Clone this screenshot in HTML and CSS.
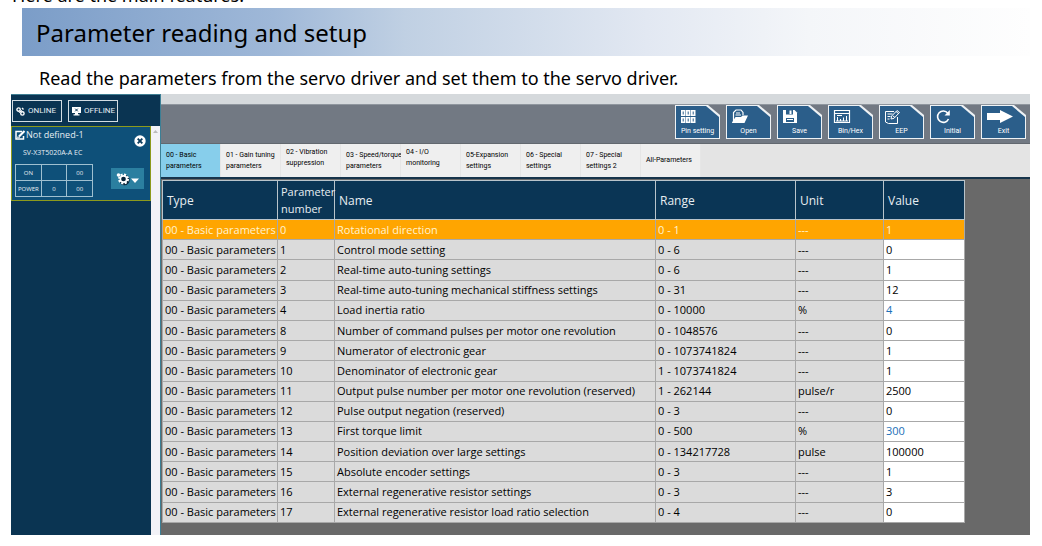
FILE: index.html
```
<!DOCTYPE html>
<html lang="en">
<head>
<meta charset="utf-8">
<title>Parameter reading and setup</title>
<link rel="stylesheet" href="styles.css">
</head>
<body>
<p class="intro">Here are the main features:</p>
<h1 class="banner">Parameter reading and setup</h1>
<p class="lead">Read the parameters from the servo driver and set them to the servo driver.</p>
<div class="app">
  <aside class="sidebar">
    <div class="modes">
      <button class="mode" type="button"><svg width="9" height="9" viewBox="0 0 9 9" fill="none" stroke="#fff" stroke-width="1.4"><circle cx="2.6" cy="2.6" r="1.7"/><circle cx="6.4" cy="6.4" r="1.7"/><path d="M3 5.5 6 3.5M6 1l1.5 1.5"/></svg>ONLINE</button>
      <button class="mode" type="button"><svg width="9" height="9" viewBox="0 0 9 9"><path fill="#fff" d="M0 0h9v6H6v1.2h1.5V8.500H1.500V7.200H3V6H0z"/><path stroke="#0a3555" d="m3.200 1.700 2.600 2.600m0-2.600L3.200 4.300"/></svg>OFFLINE</button>
    </div>
    <div class="devices">
      <section class="device">
        <div class="device-head">
          <svg width="11" height="10" viewBox="0 0 11 10" fill="none" stroke="#fff"><path stroke-width="1.500" d="M7 1.500H1v7.500h7.500V6"/><path stroke-width="2.200" d="M4 6.500 9.500 1"/><path d="M2 7.200h3"/></svg>
          <span>Not defined-1</span>
          <button class="close" type="button" aria-label="Remove device"><svg width="12" height="12" viewBox="0 0 12 12"><circle cx="6" cy="6" r="5.700" fill="#fff"/><path d="m3.700 3.700 4.600 4.600m0-4.600L3.700 8.300" stroke="#0b3c5d" stroke-width="1.900"/></svg></button>
        </div>
        <div class="model">SV-X3T5020A-A EC</div>
        <div class="device-body">
          <table class="status">
            <tr><td>ON</td><td></td><td>00</td></tr>
            <tr><td>POWER</td><td>0</td><td>00</td></tr>
          </table>
          <button class="gear" type="button" aria-label="Device settings"><svg width="24" height="14" viewBox="0 0 24 14"><circle cx="8.500" cy="8" r="3.900" fill="none" stroke="#06243a" stroke-width="2.500"/><circle cx="7.500" cy="7" r="4.300" fill="none" stroke="#fff" stroke-width="2.400" stroke-dasharray="2 1.370"/><circle cx="7.500" cy="7" r="3.200" fill="#06243a" stroke="#fff" stroke-width="1.700"/><circle cx="2.500" cy="3" r="1.800" fill="#fff"/><path d="M15 6.500h8l-4 4.500z" fill="#fff"/></svg></button>
        </div>
      </section>
      <div class="scroll"><svg width="5" height="3" viewBox="0 0 5 3"><path d="M0 3 2.500 0 5 3z" fill="#bbb"/></svg></div>
    </div>
  </aside>
  <main class="main">
    <div class="strip"></div>
    <div class="toolbar">
      <button class="tool" type="button"><span class="face"><svg width="22" height="16" viewBox="0 0 22 16"><path fill="#fff" d="M1 1h4.500v6H1zM6 1h4.500v6H6zM11 1h4.500v6H11zM1 8h4.500v6H1zM6 8h4.500v6H6zM11 8h4.500v6H11z"/><path stroke="#2b5e8a" d="M3.200 2.500v3M8.200 2.500v3M13.200 2.500v3M3.200 9.500v3M8.200 9.500v3M13.200 9.500v3"/></svg>Pin setting</span></button>
      <button class="tool" type="button"><span class="face"><svg width="22" height="16" viewBox="0 0 22 16"><path fill="none" stroke="#fff" stroke-width="1.200" d="M2.500 13V3.500L5 1h5l2 2.500V6M5 4h4M4.500 6H10"/><path fill="#fff" d="M1 13.500 4.500 8H10l1.500-1.500H17L13.500 14H1z"/></svg>Open</span></button>
      <button class="tool" type="button"><span class="face"><svg width="22" height="16" viewBox="0 0 22 16"><path fill="#fff" d="M1 1h11.500L15 3.500V14H1z"/><path fill="#2b5e8a" d="M4 1h7v4.500H4zM4 9h8v4H4z"/><path fill="#fff" d="M7.500 1.500h2V5h-2zM5 10h6v1H5z"/></svg>Save</span></button>
      <button class="tool" type="button"><span class="face"><svg width="22" height="16" viewBox="0 0 22 16" fill="none" stroke="#fff"><path stroke-width="1.200" d="M1.500 1.500h15v12h-15zM1.500 4.500h15"/><path d="M4.500 8v4M7.500 10v2M10.500 8.500V12M13.500 7v5M3 12h12M4 6.500h5"/></svg>Bin/Hex</span></button>
      <button class="tool" type="button"><span class="face"><svg width="22" height="16" viewBox="0 0 22 16" fill="none" stroke="#fff"><path d="M10 2.500H1.500v10.500l3 1.500h9V8M3.500 5h5M3.500 7.500h3M3.500 10h2"/><path d="m7 10 .7-3L13 1.500l2.500 2L10 9.300zM9 7l2 1.500M12 2.500l2.500 2"/></svg>EEP</span></button>
      <button class="tool" type="button"><span class="face"><svg width="22" height="16" viewBox="0 0 22 16"><path fill="none" stroke="#fff" stroke-width="1.600" d="M12.800 4.200A5.700 5.700 0 1 0 13.500 10"/><path fill="#fff" d="M14.800 1v5.500H9.500z"/></svg>Initial</span></button>
      <button class="tool" type="button"><span class="face"><svg width="28" height="16" viewBox="0 0 28 16"><path fill="#fff" d="M1 4h13V1l13 6.500L14 14v-3H1z"/></svg>Exit</span></button>
    </div>
    <nav class="tabs">
      <button class="tab active" type="button">00 - Basic<br>parameters</button>
      <button class="tab" type="button">01 - Gain tuning<br>parameters</button>
      <button class="tab high" type="button">02 - Vibration<br>suppression</button>
      <button class="tab" type="button">03 - Speed/torque<br>parameters</button>
      <button class="tab high" type="button">04 - I/O<br>monitoring</button>
      <button class="tab" type="button">05-Expansion<br>settings</button>
      <button class="tab" type="button">06 - Special<br>settings</button>
      <button class="tab" type="button">07 - Special<br>settings 2</button>
      <button class="tab" type="button">All-Parameters</button>
    </nav>
    <div class="content">
      <table class="params">
        <colgroup><col class="c-type"><col class="c-num"><col class="c-name"><col class="c-range"><col class="c-unit"><col class="c-value"></colgroup>
        <thead><tr><th>Type</th><th>Parameter number</th><th>Name</th><th>Range</th><th>Unit</th><th>Value</th></tr></thead>
        <tbody>
          <tr class="selected"><td>00 - Basic parameters</td><td>0</td><td>Rotational direction</td><td>0 - 1</td><td>---</td><td>1</td></tr>
          <tr><td>00 - Basic parameters</td><td>1</td><td>Control mode setting</td><td>0 - 6</td><td>---</td><td>0</td></tr>
          <tr><td>00 - Basic parameters</td><td>2</td><td>Real-time auto-tuning settings</td><td>0 - 6</td><td>---</td><td>1</td></tr>
          <tr><td>00 - Basic parameters</td><td>3</td><td>Real-time auto-tuning mechanical stiffness settings</td><td>0 - 31</td><td>---</td><td>12</td></tr>
          <tr><td>00 - Basic parameters</td><td>4</td><td>Load inertia ratio</td><td>0 - 10000</td><td>%</td><td class="changed">4</td></tr>
          <tr><td>00 - Basic parameters</td><td>8</td><td>Number of command pulses per motor one revolution</td><td>0 - 1048576</td><td>---</td><td>0</td></tr>
          <tr><td>00 - Basic parameters</td><td>9</td><td>Numerator of electronic gear</td><td>0 - 1073741824</td><td>---</td><td>1</td></tr>
          <tr><td>00 - Basic parameters</td><td>10</td><td>Denominator of electronic gear</td><td>1 - 1073741824</td><td>---</td><td>1</td></tr>
          <tr><td>00 - Basic parameters</td><td>11</td><td>Output pulse number per motor one revolution (reserved)</td><td>1 - 262144</td><td>pulse/r</td><td>2500</td></tr>
          <tr><td>00 - Basic parameters</td><td>12</td><td>Pulse output negation (reserved)</td><td>0 - 3</td><td>---</td><td>0</td></tr>
          <tr><td>00 - Basic parameters</td><td>13</td><td>First torque limit</td><td>0 - 500</td><td>%</td><td class="changed">300</td></tr>
          <tr><td>00 - Basic parameters</td><td>14</td><td>Position deviation over large settings</td><td>0 - 134217728</td><td>pulse</td><td>100000</td></tr>
          <tr><td>00 - Basic parameters</td><td>15</td><td>Absolute encoder settings</td><td>0 - 3</td><td>---</td><td>1</td></tr>
          <tr><td>00 - Basic parameters</td><td>16</td><td>External regenerative resistor settings</td><td>0 - 3</td><td>---</td><td>3</td></tr>
          <tr><td>00 - Basic parameters</td><td>17</td><td>External regenerative resistor load ratio selection</td><td>0 - 4</td><td>---</td><td>0</td></tr>
        </tbody>
      </table>
    </div>
  </main>
</div>
</body>
</html>
```
FILE: styles.css
```
* { box-sizing: border-box; }
body { margin: 0; background: #fff; color: #000; font-family: "Noto Sans", "Open Sans", sans-serif; overflow: hidden; }
button { font: inherit; color: inherit; margin: 0; cursor: pointer; }
svg { display: block; flex: none; }

.intro { margin: -17px 0 0 12px; font-size: 18px; line-height: 25px; }
.banner { margin: 0 12px 0 22px; padding: 2px 14px 0; font-size: 24px; line-height: 46px; font-weight: 400;
  background: linear-gradient(90deg, #7b9dc8 0%, #9fb8d8 25%, #c0d0e3 38%, #e2e8f2 62%, #f4f6f9 78%, #fefefe 100%); }
.lead { margin: 0; padding: 7px 0 1px 39px; font-size: 18px; line-height: 30px; }

.app { display: flex; margin: 0 12px 0 11px; background: #0a3452; }
.sidebar { display: flex; flex-direction: column; width: 150px; flex: none; border-top: 1px solid #3f7e92; border-right: 1px solid #3c7f95; color: #e6eef3; }
.modes { display: flex; gap: 6px; padding: 5px 1px 4px; }
.mode { display: flex; align-items: center; gap: 3px; width: 50px; height: 22px; padding: 0 3px; border: 1px solid #d3dde3; background: transparent; font: 8px/12px Roboto, sans-serif; }
.devices { display: flex; flex: 1; }
.device { flex: 1; align-self: flex-start; height: 75px; border: 1px solid #8d9a1c; background: #0e5079; padding: 0 3px; }
.device-head { display: flex; align-items: center; height: 15px; font: 9px/14px "Open Sans", sans-serif; }
.close { margin: 12px 1px 0 auto; padding: 0; border: 0; background: none; }
.model { padding-left: 8px; font: 7px/22px "Open Sans", sans-serif; }
.device-body { display: flex; justify-content: space-between; }
.status { width: 78px; height: 33px; border-collapse: collapse; table-layout: fixed; font: 6px/12px "Open Sans", sans-serif; }
.status td { border: 1px solid #9fc0d0; padding: 0; text-align: center; }
.gear { display: flex; align-items: center; justify-content: center; width: 33px; height: 21px; margin: 4px 3px 0 0; padding: 0; border: 0; background: #2b7fa0; }
.scroll { width: 9px; flex: none; background: #f2f2f7; padding: 4px 2px; }

.main { flex: 1; min-width: 0; }
.strip { height: 10px; background: #d5d9dc; }
.toolbar { display: flex; justify-content: flex-end; gap: 6px; height: 40px; padding: 0 4px 0 0; background: #727983; border-top: 1px solid #8f969e; border-bottom: 1px solid #62686f; }
.tool { width: 45px; height: 34px; padding: 1px; border: 0; background: #eef2f5; clip-path: polygon(0 0, 33px 0, 100% 10px, 100% 100%, 0 100%); }
.face { display: flex; flex-direction: column; align-items: center; justify-content: space-between; height: 100%; padding: 3px 0 2px; background: #2b5e8a; color: #fff; font: 7px/10px Roboto, sans-serif; clip-path: polygon(0 0, 30px 0, 100% 11px, 100% 100%, 0 100%); }
.face svg { align-self: flex-start; margin-left: 4px; }

.tabs { display: flex; height: 33px; background: #e4e4e4; }
.tab { width: 60px; padding: 0 0 0 5px; border: 0; border-right: 1px solid #e6e6e6; background: #efefef; text-align: left; white-space: nowrap; font: 7px/11px Roboto, sans-serif; }
.tab.high { padding-bottom: 6px; }
.tab.active { background: #87ceeb; }

.content { padding: 1px 0 12px 1px; background: #696969; border-top: 2px solid #17344b; }
.params { width: 92%; min-width: 802px; height: 343px; border-collapse: collapse; table-layout: fixed; font: 11px/16px "Open Sans", sans-serif; }
.c-type { width: 115px; } .c-num { width: 57px; } .c-name { width: 321px; } .c-range { width: 140px; } .c-unit { width: 88px; } .c-value { width: 81px; }
.params th { height: 39px; padding: 0 0 0 4px; background: #0a3555; color: #e8eef2; font-size: 12px; line-height: 17px; font-weight: 400; text-align: left; border: 1px solid #b9c4cb; }
.params th:nth-child(2) { padding-left: 3px; font-size: 11px; }
.params td { padding: 0 0 0 2px; background: #dbdbdb; border: 1px solid #a8a8a8; white-space: nowrap; }
.params td:last-child { background: #fff; }
.params td.changed { color: #1b6fb8; }
.params .selected td, .params .selected td:last-child { background: #ffa500; color: #fff3d0; }
```
